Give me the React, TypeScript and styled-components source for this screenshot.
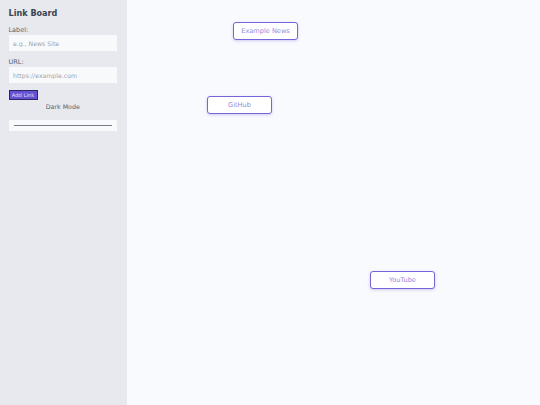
import styled, { createGlobalStyle } from "styled-components";

const GlobalStyle = createGlobalStyle`
  html, body {
    margin: 0;
    height: 100%;
  }
  #root {
    height: 100%;
  }
  body {
    font-family: "DejaVu Sans", "Liberation Sans", sans-serif;
    color: #1f2937;
  }
`;

const Layout = styled.div`
  display: flex;
  height: 405px;
  width: 540px;
  overflow: hidden;
`;

const Sidebar = styled.aside`
  width: 127px;
  box-sizing: border-box;
  padding: 8px 8.5px;
  background: #e7e9ee;
  display: flex;
  flex-direction: column;
  align-items: flex-start;
`;

const Title = styled.h2`
  margin: 0 0 7px;
  font-size: 8.1px;
  line-height: 11px;
  font-weight: 700;
  color: #3b4350;
`;

const FieldLabel = styled.label`
  font-size: 6.5px;
  line-height: 8px;
  margin-bottom: 1px;
  color: #596271;
`;

const TextInput = styled.input`
  width: 108.5px;
  height: 16px;
  box-sizing: border-box;
  border: none;
  background: #f8f9fb;
  padding: 0 4.5px;
  margin-bottom: 7px;
  font-family: inherit;
  font-size: 6.2px;
  color: #374151;
  &::placeholder {
    color: #a0a4ac;
  }
`;

const AddButton = styled.button`
  width: 29px;
  height: 10px;
  box-sizing: border-box;
  padding: 0;
  margin-top: -0.5px;
  border: 1px solid #2b2666;
  background: #6350d2;
  color: #e4e1f8;
  font-family: inherit;
  font-size: 5.2px;
`;

const DarkModeLabel = styled.div`
  width: 108.5px;
  margin-top: 2px;
  text-align: center;
  font-size: 6.3px;
  line-height: 10px;
  color: #596271;
`;

const SliderBox = styled.div`
  width: 108.5px;
  height: 11px;
  margin-top: 8.5px;
  box-sizing: border-box;
  padding: 0 5px;
  background: #f8f9fb;
  display: flex;
  align-items: center;
`;

const SliderLine = styled.div`
  flex: 1;
  height: 1px;
  background: #787d87;
`;

const Board = styled.main`
  position: relative;
  flex: 1;
  background: #f9fafe;
`;

const LinkNode = styled.a<{ $x: number; $y: number }>`
  position: absolute;
  left: ${(p) => p.$x}px;
  top: ${(p) => p.$y}px;
  width: 65px;
  height: 18px;
  box-sizing: border-box;
  display: flex;
  align-items: center;
  justify-content: center;
  background: #fff;
  border: 1px solid #7465d8;
  border-radius: 3px;
  box-shadow: 0 1px 3px rgba(109, 91, 208, 0.3);
  color: #9688e2;
  font-size: 6.6px;
  white-space: nowrap;
`;

const links = [
  { label: "Example News", x: 106, y: 22 },
  { label: "GitHub", x: 80, y: 96 },
  { label: "YouTube", x: 243, y: 271 },
];

const App = () => {
  return (
    <Layout>
      <GlobalStyle />
      <Sidebar>
        <Title>Link Board</Title>
        <FieldLabel>Label:</FieldLabel>
        <TextInput placeholder="e.g., News Site" />
        <FieldLabel>URL:</FieldLabel>
        <TextInput placeholder="https://example.com" />
        <AddButton>Add Link</AddButton>
        <DarkModeLabel>Dark Mode</DarkModeLabel>
        <SliderBox>
          <SliderLine />
        </SliderBox>
      </Sidebar>
      <Board>
        {links.map((link) => (
          <LinkNode key={link.label} $x={link.x} $y={link.y}>
            {link.label}
          </LinkNode>
        ))}
      </Board>
    </Layout>
  );
};

export default App;
